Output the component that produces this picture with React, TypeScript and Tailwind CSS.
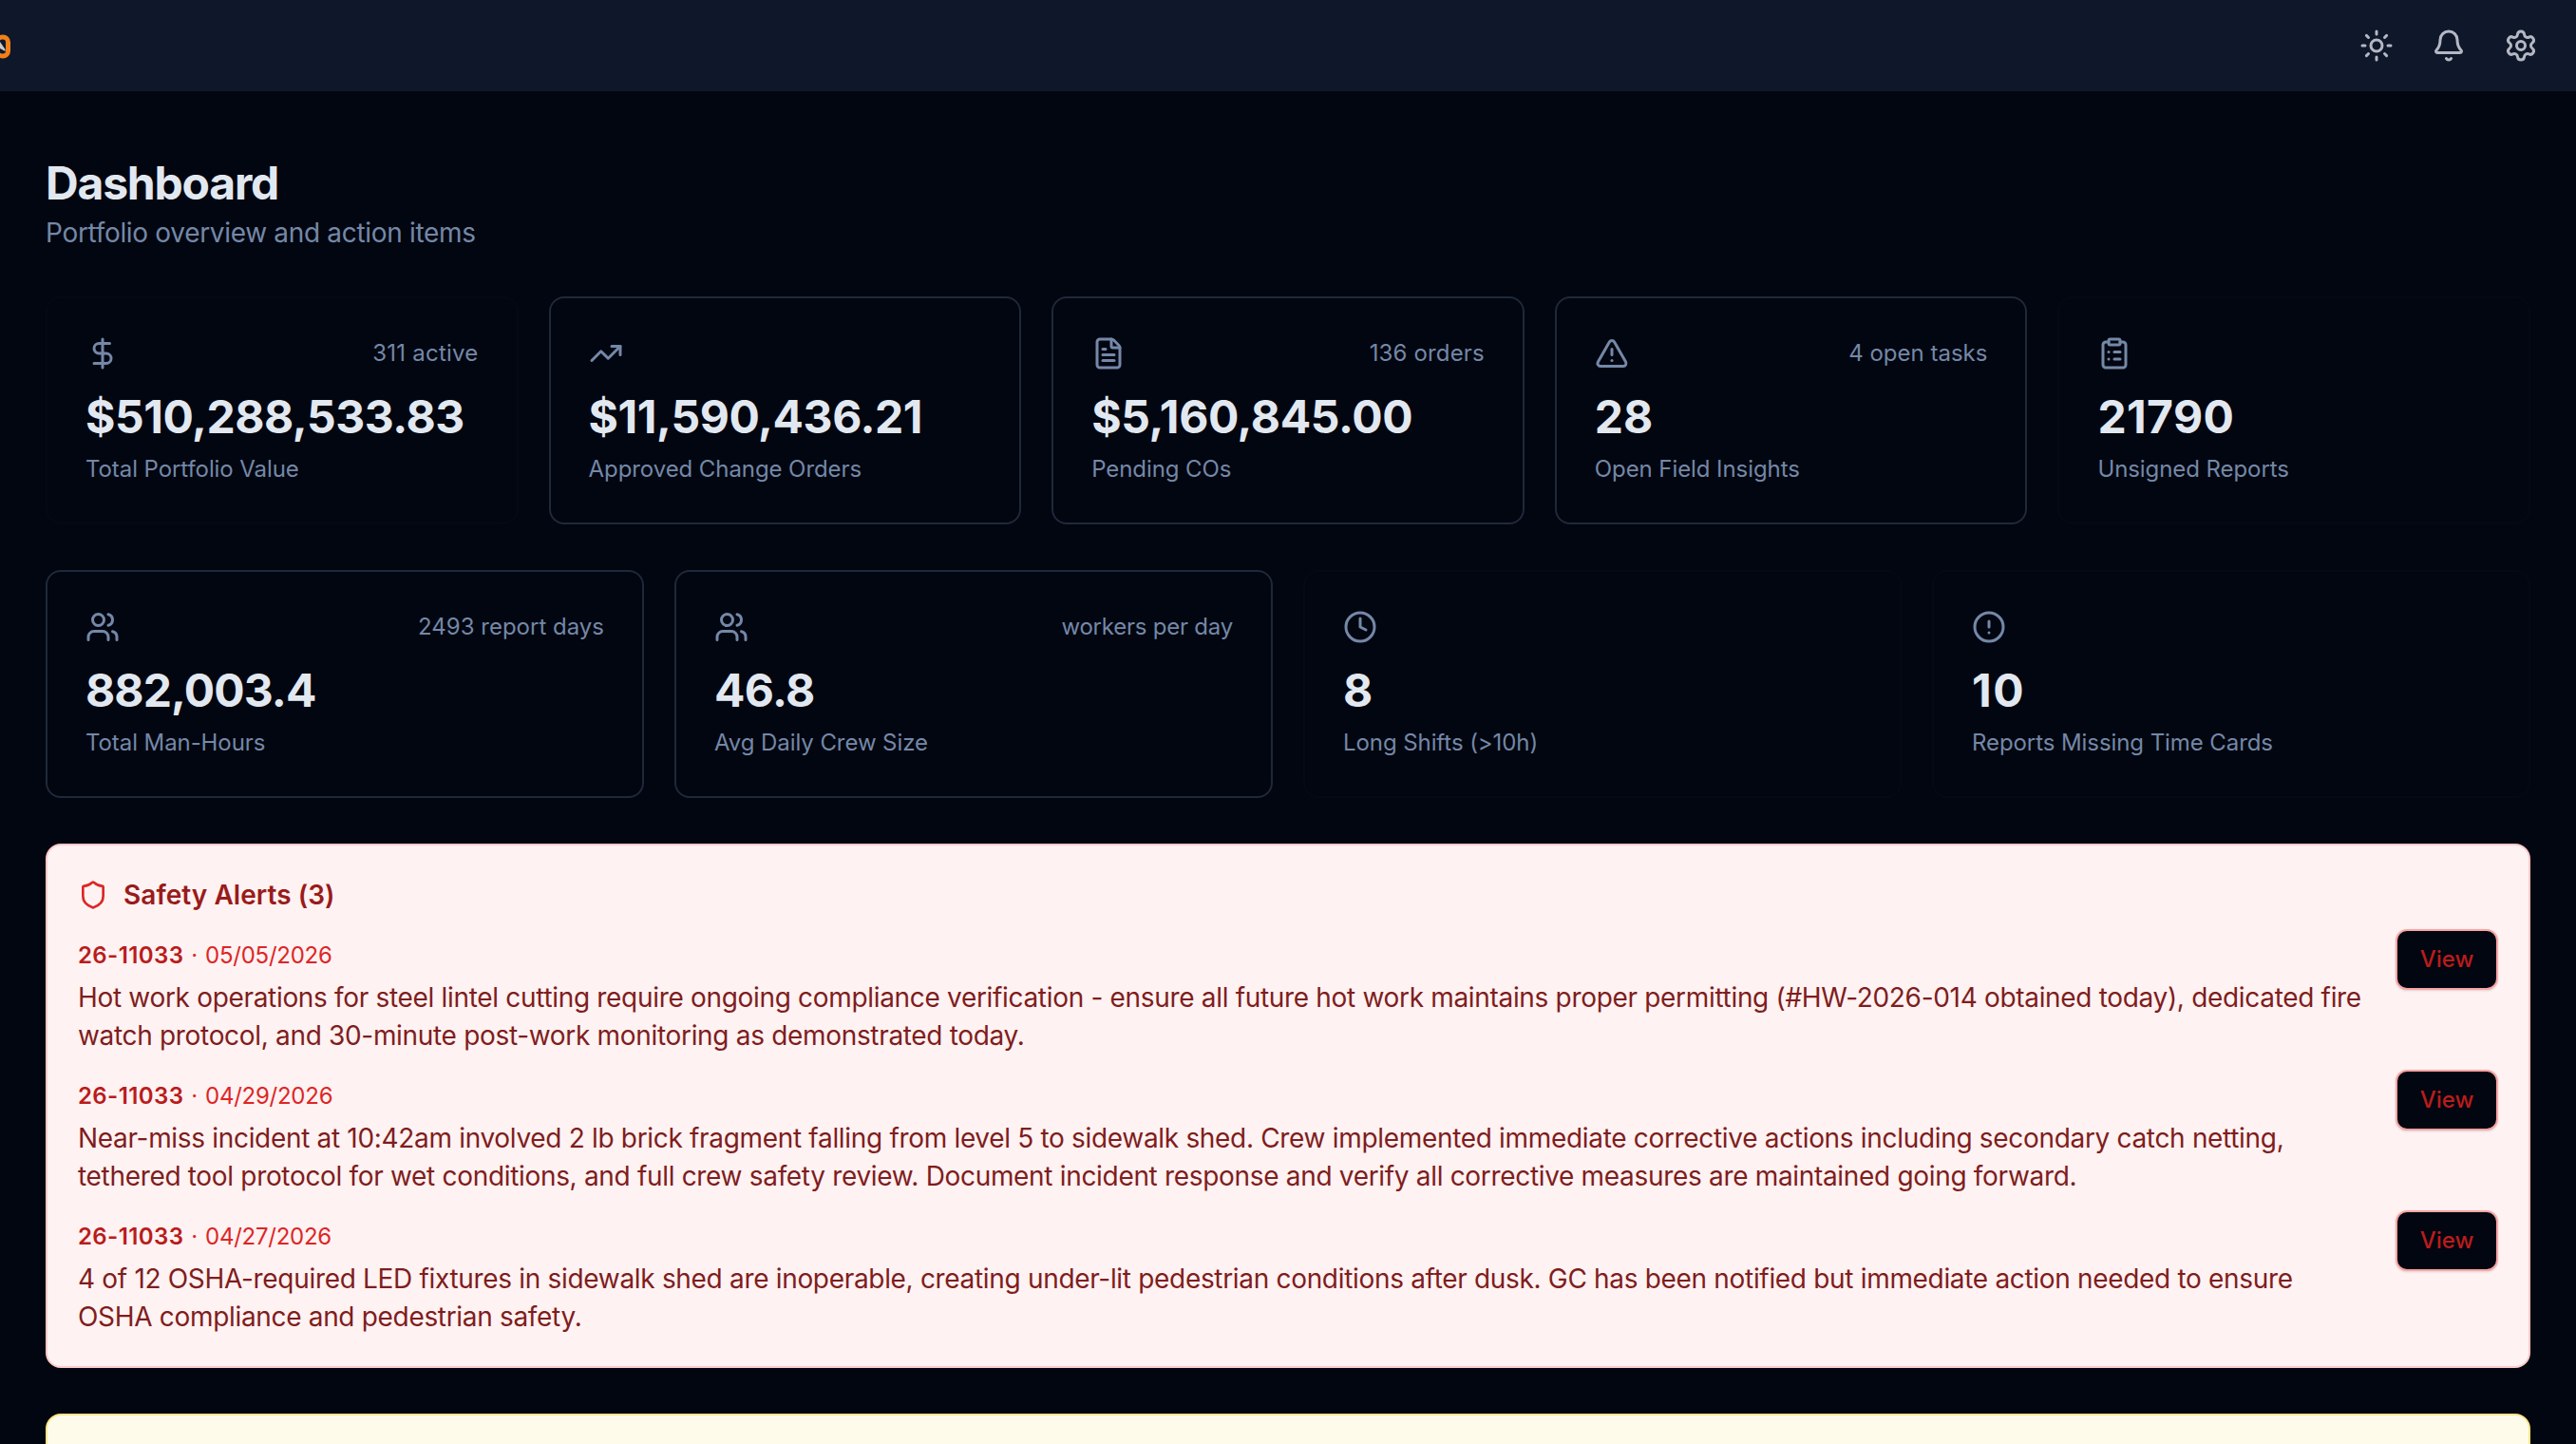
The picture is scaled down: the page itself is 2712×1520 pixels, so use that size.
import {
  Bell,
  CircleAlert,
  ClipboardList,
  Clock,
  DollarSign,
  FileText,
  Settings,
  Shield,
  Sun,
  TrendingUp,
  TriangleAlert,
  Users,
  type LucideIcon,
} from "lucide-react"

type Stat = {
  icon: LucideIcon
  value: string
  label: string
  note?: string
  muted?: boolean
  valueClass?: string
  noteClass?: string
}

const portfolioStats: Stat[] = [
  { icon: DollarSign, value: "$510,288,533.83", label: "Total Portfolio Value", note: "311 active", muted: true, valueClass: "tracking-[-0.46px]", noteClass: "tracking-[0.25px]" },
  { icon: TrendingUp, value: "$11,590,436.21", label: "Approved Change Orders", valueClass: "tracking-[-0.43px]" },
  { icon: FileText, value: "$5,160,845.00", label: "Pending COs", note: "136 orders", valueClass: "tracking-[-0.36px]", noteClass: "tracking-[0.15px]" },
  { icon: TriangleAlert, value: "28", label: "Open Field Insights", note: "4 open tasks" },
  { icon: ClipboardList, value: "21790", label: "Unsigned Reports", muted: true, valueClass: "tracking-[0.4px]" },
]

const laborStats: Stat[] = [
  { icon: Users, value: "882,003.4", label: "Total Man-Hours", note: "2493 report days", valueClass: "tracking-[-0.9px]" },
  { icon: Users, value: "46.8", label: "Avg Daily Crew Size", note: "workers per day", valueClass: "tracking-[-0.6px]", noteClass: "tracking-[-0.22px]" },
  { icon: Clock, value: "8", label: "Long Shifts (>10h)", muted: true },
  { icon: CircleAlert, value: "10", label: "Reports Missing Time Cards", muted: true, valueClass: "tracking-[1.5px]" },
]

const alerts = [
  {
    job: "26-11033",
    date: "05/05/2026",
    text: "Hot work operations for steel lintel cutting require ongoing compliance verification - ensure all future hot work maintains proper permitting (#HW-2026-014 obtained today), dedicated fire watch protocol, and 30-minute post-work monitoring as demonstrated today.",
  },
  {
    job: "26-11033",
    date: "04/29/2026",
    text: "Near-miss incident at 10:42am involved 2 lb brick fragment falling from level 5 to sidewalk shed. Crew implemented immediate corrective actions including secondary catch netting, tethered tool protocol for wet conditions, and full crew safety review. Document incident response and verify all corrective measures are maintained going forward.",
  },
  {
    job: "26-11033",
    date: "04/27/2026",
    text: "4 of 12 OSHA-required LED fixtures in sidewalk shed are inoperable, creating under-lit pedestrian conditions after dusk. GC has been notified but immediate action needed to ensure OSHA compliance and pedestrian safety.",
  },
]

const StatCard = ({ icon: Icon, value, label, note, muted, valueClass = "", noteClass = "" }: Stat) => (
  <div className={`h-60 rounded-2xl border-2 p-10 ${muted ? "border-[#040914]" : "border-[#1e293b]"}`}>
    <div className="flex h-9 items-center justify-between text-[#7488a8]">
      <Icon size={36} />
      {note && <span className={`text-2xl ${noteClass}`}>{note}</span>}
    </div>
    <p className={`mt-[17px] text-5xl leading-[64px] font-bold ${valueClass}`}>{value}</p>
    <p className="mt-[7px] text-2xl tracking-[-0.08px] text-[#7488a8]">{label}</p>
  </div>
)

const Header = () => (
  <header className="flex h-24 items-center justify-between overflow-hidden bg-[#0f172a] pr-10">
    <svg width="12" height="28" viewBox="0 0 12 28" fill="none">
      <rect x="-3" y="5" width="11.5" height="20" rx="5.5" stroke="#f08019" strokeWidth="5" />
      <path d="M0 10l5.5 8v2L0 17z" fill="#c9c9c9" />
    </svg>
    <div className="flex items-center gap-10 text-[#b4b8c2]">
      <Sun size={36} />
      <Bell size={36} />
      <Settings size={36} />
    </div>
  </header>
)

const SafetyAlerts = () => (
  <section className="rounded-2xl border-2 border-[#fecaca] bg-[#fef2f2] p-8">
    <div className="flex h-10 items-center gap-4">
      <Shield size={32} className="text-[#dc2626]" />
      <h2 className="text-[28px] leading-10 font-semibold tracking-[0.05px] text-[#991b1b]">Safety Alerts (3)</h2>
    </div>
    <div className="mt-4 flex flex-col gap-4">
      {alerts.map((alert) => (
        <div key={alert.date} className="flex items-start gap-6">
          <div className="flex-1 pt-3">
            <p className="text-2xl tracking-[-0.25px] text-[#dc2626]">
              <span className="font-semibold tracking-[0.4px] text-[#b91c1c]">{alert.job}</span>
              <span className="mx-[1.5px]"> · </span>
              {alert.date}
            </p>
            <p className="mt-2 text-[28px] leading-10 tracking-[-0.32px] text-[#7f1d1d]">{alert.text}</p>
          </div>
          <button className="h-16 w-[108px] rounded-xl border-2 border-[#fca5a5] bg-[#020610] text-2xl font-medium text-[#b91c1c] shadow-sm">
            View
          </button>
        </div>
      ))}
    </div>
  </section>
)

export default function App() {
  return (
    <div className="h-[1520px] w-[2712px] overflow-hidden bg-[#020610] font-['Inter',sans-serif] text-[#e2e8f0]">
      <Header />
      <main className="flex flex-col gap-12 px-12 pt-[65px]">
        <div className="h-[103px]">
          <h1 className="text-5xl leading-[64px] font-bold tracking-tight">Dashboard</h1>
          <p className="text-[28px] leading-10 tracking-[-0.32px] text-[#7488a8]">Portfolio overview and action items</p>
        </div>
        <div className="grid grid-cols-5 gap-8">
          {portfolioStats.map((stat) => (
            <StatCard key={stat.label} {...stat} />
          ))}
        </div>
        <div className="grid grid-cols-4 gap-8">
          {laborStats.map((stat) => (
            <StatCard key={stat.label} {...stat} />
          ))}
        </div>
        <SafetyAlerts />
        <section className="h-40 shrink-0 rounded-2xl border-2 border-[#fde68a] bg-[#fffbeb]" />
      </main>
    </div>
  )
}
